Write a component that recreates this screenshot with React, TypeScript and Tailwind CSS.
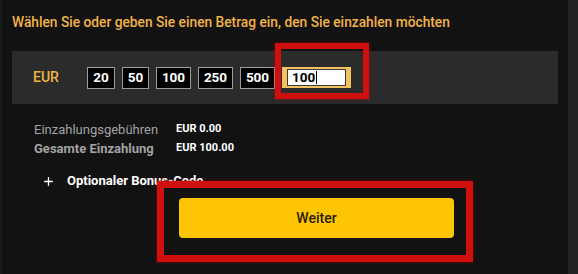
import { Plus } from "lucide-react";

const amounts = [
  { v: "20", w: "w-[28px]" },
  { v: "50", w: "w-[27px]" },
  { v: "100", w: "w-[35px]" },
  { v: "250", w: "w-[35px]" },
  { v: "500", w: "w-[35px]" },
];

const fees = [
  { label: "Einzahlungsgebühren", value: "EUR 0.00", bold: false },
  { label: "Gesamte Einzahlung", value: "EUR 100.00", bold: true },
];

export default function App() {
  return (
    <div
      className="relative flex h-[274px] w-[578px] overflow-hidden bg-[#121212]"
      style={{ fontFamily: "Roboto, 'Liberation Sans', sans-serif" }}
    >
      {/* main column */}
      <div className="flex-1 border-l-2 border-[#1b1b1b] pl-[10px] pr-[10px]">
        <h2 className="pt-[14px] text-[13.75px] leading-[17px] font-medium text-[#f2b347]">
          Wählen Sie oder geben Sie einen Betrag ein, den Sie einzahlen möchten
        </h2>

        {/* currency + amount picker */}
        <div className="mt-[20px] flex h-[53px] items-center bg-[#2b2b2b] pl-[21px]">
          <span className="w-[54px] text-[14px] font-medium text-[#efb443]">EUR</span>
          <div className="flex items-center gap-[7px]">
            {amounts.map((a) => (
              <button
                key={a.v}
                className={
                  "flex h-[22px] items-center justify-center border border-[#9c9c9c] bg-black text-[13.5px] font-bold text-white " +
                  a.w
                }
              >
                {a.v}
              </button>
            ))}
            <div className="flex h-[21px] w-[69px] items-center bg-[#f1c25e] px-[5px] py-[2px]">
              <div className="flex h-[17px] flex-1 items-center border border-[#3a3a3a] bg-white pl-[4px] text-[13.5px] font-bold text-black">
                100
                <span className="ml-px h-[13px] w-px bg-black" />
              </div>
            </div>
          </div>
        </div>

        {/* fees */}
        <div className="mt-[16px] pl-[22px]">
          {fees.map((f) => (
            <div key={f.label} className="flex h-[19px] items-center">
              <span
                className={
                  "w-[142px] text-[13px] text-[#a3a3a3] " + (f.bold ? "font-bold" : "font-normal")
                }
              >
                {f.label}
              </span>
              <span className="text-[11px] font-bold text-white">{f.value}</span>
            </div>
          ))}
        </div>

        {/* bonus code */}
        <div className="mt-[14px] flex h-[18px] items-center pl-[30px] text-white">
          <Plus size={13} strokeWidth={2.5} />
          <span className="ml-[12px] text-[13px] font-bold">Optionaler Bonus-Code</span>
        </div>

        <button className="mt-[8px] ml-[167px] flex h-[40px] w-[275px] items-center justify-center rounded-[4px] bg-[#fec504] text-[14px] font-medium text-[#2a1c05]">
          Weiter
        </button>
      </div>

      {/* right edge strip */}
      <div className="w-[10px] bg-[#222222]" />

      {/* annotation boxes */}
      <div className="pointer-events-none absolute left-[275px] top-[43px] h-[56px] w-[94px] border-[6px] border-[#d0100f] shadow-[0_0_3px_rgba(200,0,0,0.6)]" />
      <div className="pointer-events-none absolute left-[157px] top-[181px] h-[81px] w-[316px] border-[7px] border-[#d0100f] shadow-[0_0_3px_rgba(200,0,0,0.6)]" />
    </div>
  );
}
